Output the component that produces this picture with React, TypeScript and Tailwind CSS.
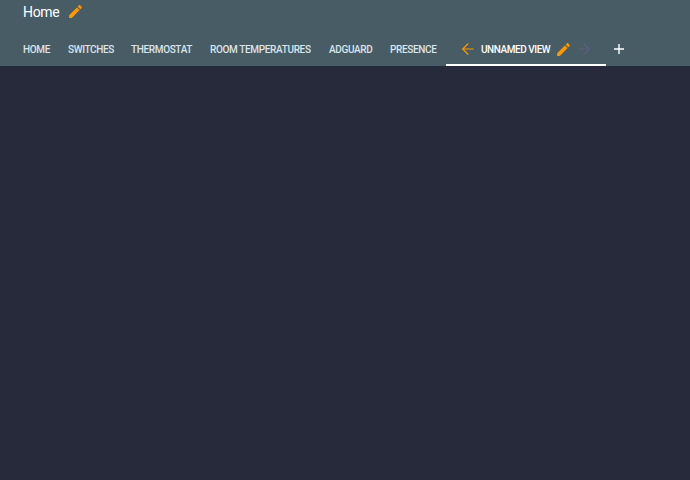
import { ArrowLeft, ArrowRight } from "lucide-react";

const tabs = [
  { label: "HOME", width: "w-[45px]" },
  { label: "SWITCHES", width: "w-[63px]" },
  { label: "THERMOSTAT", width: "w-[79px]" },
  { label: "ROOM TEMPERATURES", width: "w-[119px]" },
  { label: "ADGUARD", width: "w-[61px]" },
  { label: "PRESENCE", width: "w-[56px]" },
];

function Pencil({ className }: { className: string }) {
  return (
    <svg viewBox="0 0 24 24" className={className} fill="currentColor">
      <path d="M20.71 7.04c.39-.39.39-1.04 0-1.41l-2.34-2.34c-.37-.39-1.02-.39-1.41 0l-1.84 1.83 3.75 3.75M3 17.25V21h3.75L17.81 9.93l-3.75-3.75L3 17.25z" />
    </svg>
  );
}

export default function App() {
  return (
    <div className="h-[480px] w-[690px] overflow-hidden bg-[#272a3a] font-['Roboto',sans-serif]">
      <header className="h-[66px] bg-[#485c66] pl-[23px]">
        <div className="flex h-[23px] items-center">
          <span className="text-[14px] leading-none tracking-[-0.3px] text-white">Home</span>
          <Pencil className="ml-[8px] size-[17px] text-[#ff9800]" />
        </div>
        <nav className="mt-[9px] flex h-[34px] items-stretch">
          {tabs.map((tab) => (
            <div key={tab.label} className={`${tab.width} flex items-center whitespace-nowrap pt-[1px] text-[10px] font-medium tracking-[-0.35px] text-[#dbe4ea]`}>
              {tab.label}
            </div>
          ))}
          <div className="relative flex w-[160px] items-center whitespace-nowrap pl-[13px] text-[10px] font-medium tracking-[-0.45px] text-white">
            <ArrowLeft className="size-[18px] text-[#ff9800]" strokeWidth={1.5} />
            <span className="ml-[4px] pt-[1px]">UNNAMED VIEW</span>
            <Pencil className="ml-[5px] size-[17px] text-[#ff9800]" />
            <ArrowRight className="ml-[3px] size-[18px] text-[#5c5f82]" strokeWidth={1.5} />
            <div className="absolute bottom-0 left-0 h-[2px] w-full bg-white" />
          </div>
          <svg viewBox="0 0 12 12" className="my-auto ml-[7px] size-[12px] text-white" stroke="currentColor" strokeWidth="1.4">
            <path d="M6 1v10M1 6h10" />
          </svg>
        </nav>
      </header>
    </div>
  );
}
